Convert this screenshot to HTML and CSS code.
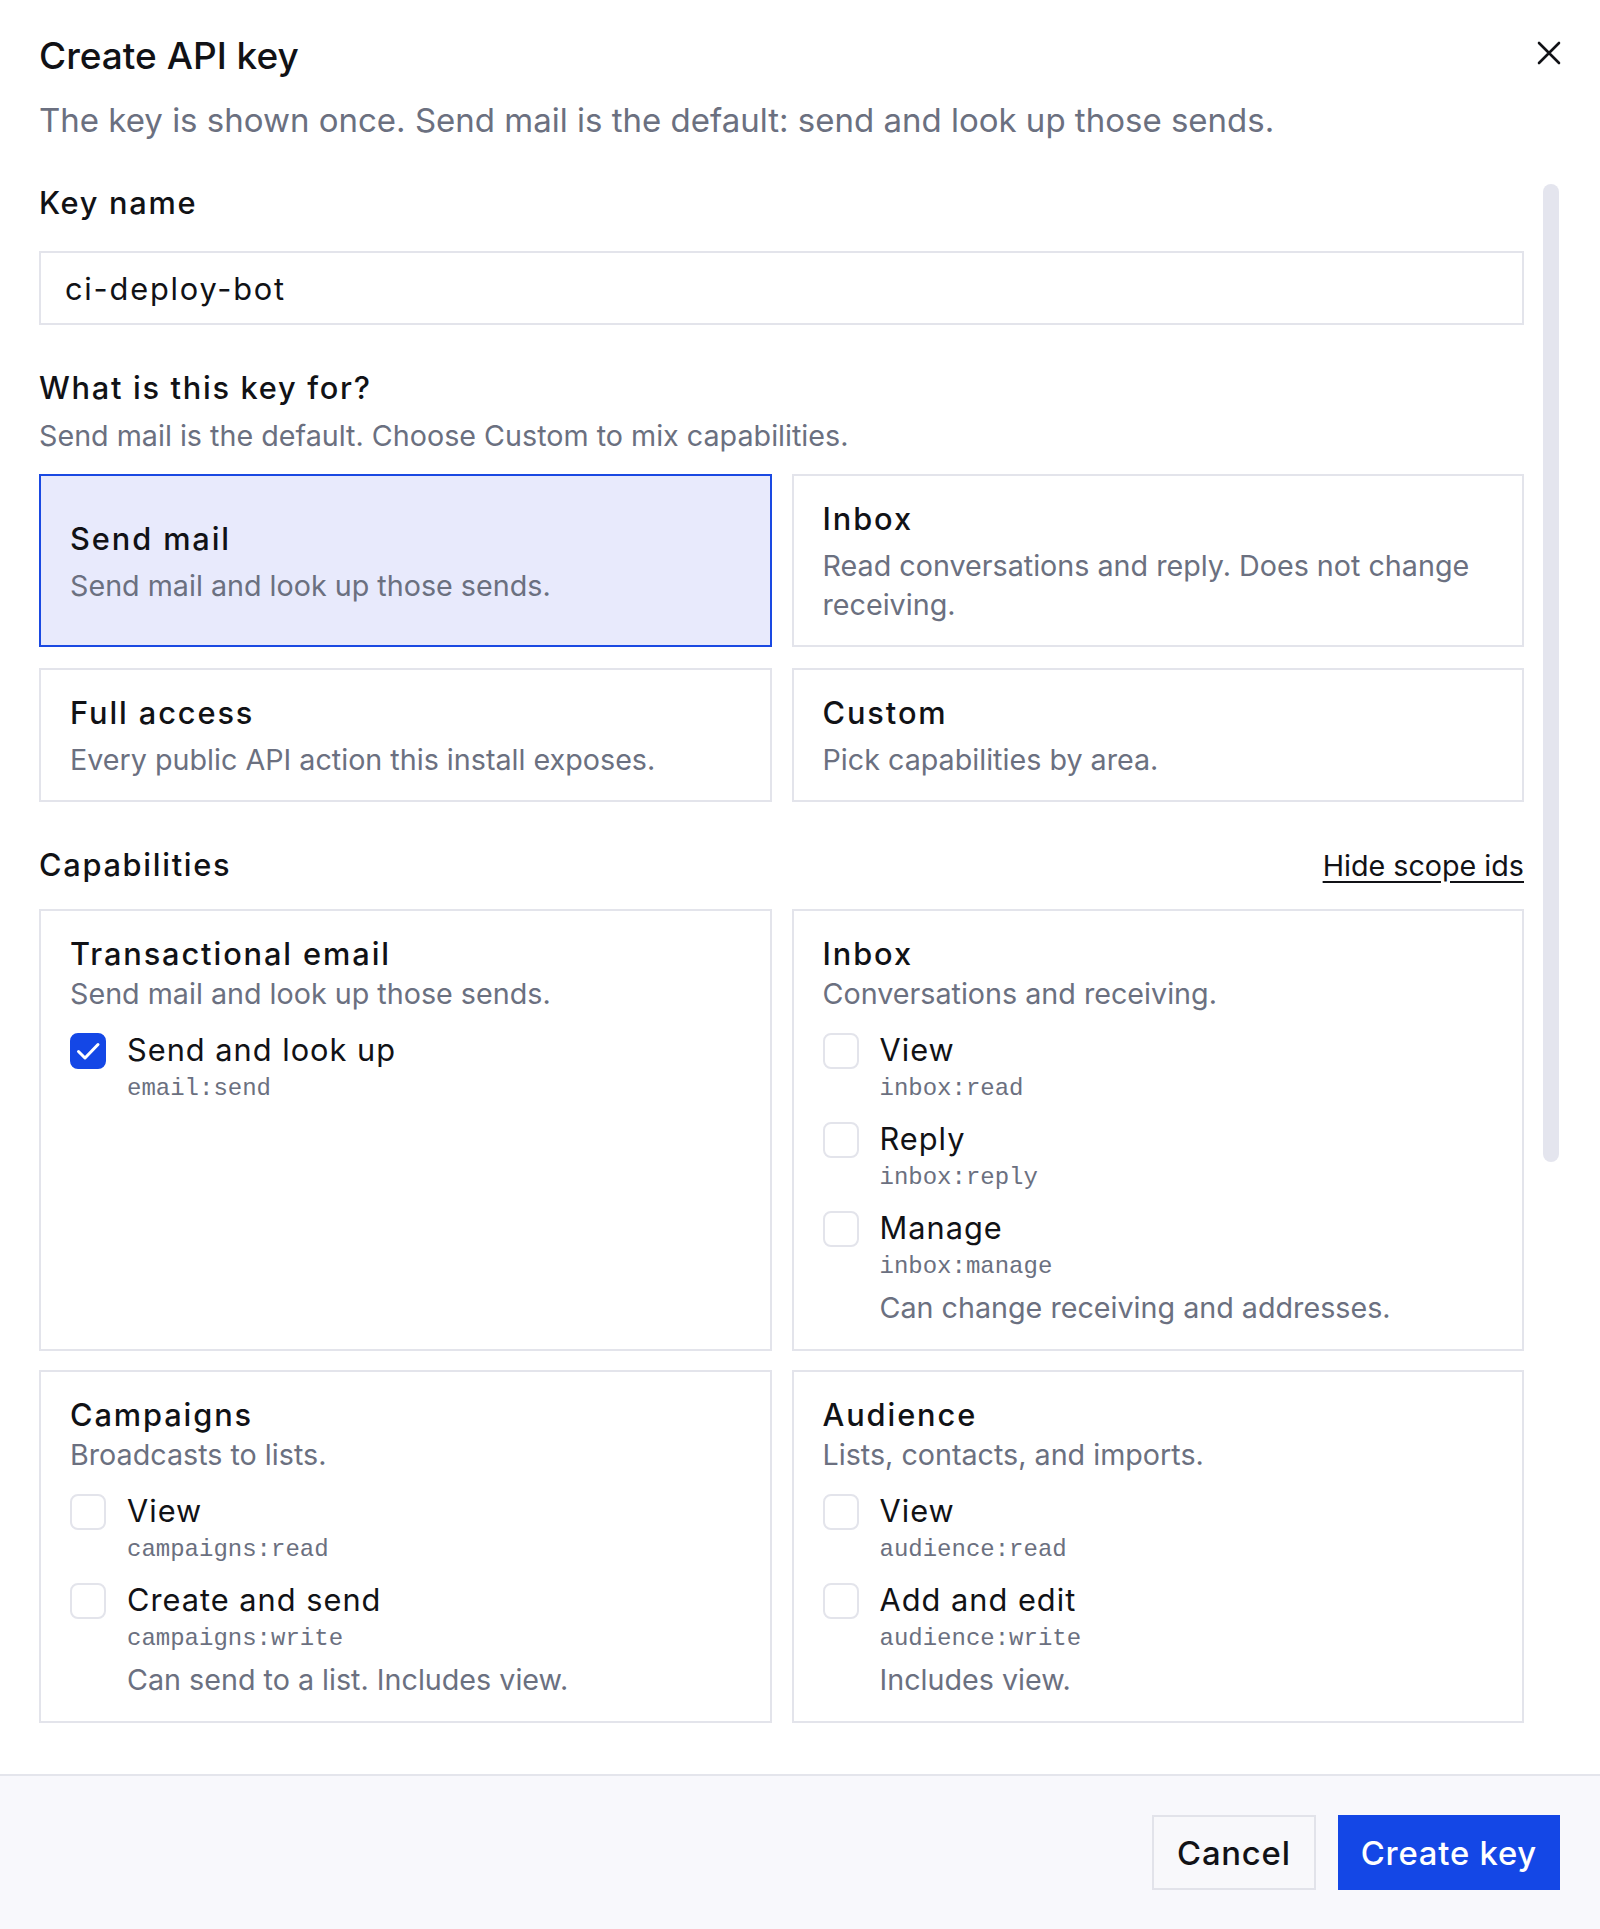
FILE: index.html
```html
<!DOCTYPE html>
<html lang="en">
<head>
    <meta charset="UTF-8">
    <meta name="viewport" content="width=device-width, initial-scale=1.0">
    <title>Create API key</title>
    <link rel="stylesheet" href="styles.css">
</head>
<body>
    <div class="dialog">
        <div class="dialog-head">
            <h1>Create API key</h1>
            <p class="lead">The key is shown once. Send mail is the default: send and look up those sends.</p>
            <button class="close" aria-label="Close">
                <svg width="24" height="24" viewBox="0 0 24 24" fill="none" stroke="currentColor" stroke-width="2.6" stroke-linecap="round">
                    <path d="M2 2 L22 22 M22 2 L2 22"/>
                </svg>
            </button>
        </div>

        <div class="dialog-main">
            <div class="dialog-body">
                <div class="field">
                    <label class="field-label" for="keyName">Key name</label>
                    <input type="text" id="keyName" class="text-input" value="ci-deploy-bot">
                </div>

                <div class="field">
                    <div class="field-label">What is this key for?</div>
                    <p class="hint">Send mail is the default. Choose Custom to mix capabilities.</p>
                    <div class="preset-grid">
                        <div class="preset selected">
                            <div class="preset-title">Send mail</div>
                            <div class="preset-desc">Send mail and look up those sends.</div>
                        </div>
                        <div class="preset">
                            <div class="preset-title">Inbox</div>
                            <div class="preset-desc">Read conversations and reply. Does not change receiving.</div>
                        </div>
                        <div class="preset">
                            <div class="preset-title">Full access</div>
                            <div class="preset-desc">Every public API action this install exposes.</div>
                        </div>
                        <div class="preset">
                            <div class="preset-title">Custom</div>
                            <div class="preset-desc">Pick capabilities by area.</div>
                        </div>
                    </div>
                </div>

                <div class="field">
                    <div class="section-row">
                        <div class="field-label">Capabilities</div>
                        <a href="#" class="link">Hide scope ids</a>
                    </div>
                    <div class="cap-grid">
                        <div class="cap-card">
                            <div class="cap-title">Transactional email</div>
                            <div class="cap-desc">Send mail and look up those sends.</div>
                            <div class="cap-list">
                                <div class="cap-item">
                                    <span class="check on"><svg width="36" height="36" viewBox="0 0 36 36" fill="none" stroke="#fff" stroke-width="3" stroke-linecap="round" stroke-linejoin="round"><path d="M8.5 18.5 L15 25 L28 11.5"/></svg></span>
                                    <div>
                                        <div class="cap-name">Send and look up</div>
                                        <code class="scope">email:send</code>
                                    </div>
                                </div>
                            </div>
                        </div>
                        <div class="cap-card">
                            <div class="cap-title">Inbox</div>
                            <div class="cap-desc">Conversations and receiving.</div>
                            <div class="cap-list">
                                <div class="cap-item">
                                    <span class="check"></span>
                                    <div>
                                        <div class="cap-name">View</div>
                                        <code class="scope">inbox:read</code>
                                    </div>
                                </div>
                                <div class="cap-item">
                                    <span class="check"></span>
                                    <div>
                                        <div class="cap-name">Reply</div>
                                        <code class="scope">inbox:reply</code>
                                    </div>
                                </div>
                                <div class="cap-item">
                                    <span class="check"></span>
                                    <div>
                                        <div class="cap-name">Manage</div>
                                        <code class="scope">inbox:manage</code>
                                        <div class="cap-note">Can change receiving and addresses.</div>
                                    </div>
                                </div>
                            </div>
                        </div>
                        <div class="cap-card">
                            <div class="cap-title">Campaigns</div>
                            <div class="cap-desc">Broadcasts to lists.</div>
                            <div class="cap-list">
                                <div class="cap-item">
                                    <span class="check"></span>
                                    <div>
                                        <div class="cap-name">View</div>
                                        <code class="scope">campaigns:read</code>
                                    </div>
                                </div>
                                <div class="cap-item">
                                    <span class="check"></span>
                                    <div>
                                        <div class="cap-name">Create and send</div>
                                        <code class="scope">campaigns:write</code>
                                        <div class="cap-note">Can send to a list. Includes view.</div>
                                    </div>
                                </div>
                            </div>
                        </div>
                        <div class="cap-card">
                            <div class="cap-title">Audience</div>
                            <div class="cap-desc">Lists, contacts, and imports.</div>
                            <div class="cap-list">
                                <div class="cap-item">
                                    <span class="check"></span>
                                    <div>
                                        <div class="cap-name">View</div>
                                        <code class="scope">audience:read</code>
                                    </div>
                                </div>
                                <div class="cap-item">
                                    <span class="check"></span>
                                    <div>
                                        <div class="cap-name">Add and edit</div>
                                        <code class="scope">audience:write</code>
                                        <div class="cap-note">Includes view.</div>
                                    </div>
                                </div>
                            </div>
                        </div>
                    </div>
                </div>
            </div>
            <!-- scroll position indicator for the body -->
            <div class="scroll-track">
                <div class="scroll-thumb"></div>
            </div>
        </div>

        <div class="dialog-foot">
            <button class="btn">Cancel</button>
            <button class="btn primary">Create key</button>
        </div>
    </div>
</body>
</html>
```

FILE: styles.css
```css
* {
    box-sizing: border-box;
}
body {
    margin: 0;
    font-family: "Inter", "Noto Sans", sans-serif;
    color: #111216;
    background: #fff;
}
.dialog {
    height: 100vh;
    display: flex;
    flex-direction: column;
    background: #fff;
}

/* header */
.dialog-head {
    position: relative;
    padding: 34px 39px 42px;
}
.dialog-head h1 {
    margin: 0;
    font-size: 37px;
    line-height: 44px;
    font-weight: 500;
}
.lead {
    margin: 20px 0 0;
    font-size: 33px;
    line-height: 44px;
    color: #6b7080;
}
.close {
    position: absolute;
    top: 33px;
    right: 31px;
    width: 40px;
    height: 40px;
    display: flex;
    align-items: center;
    justify-content: center;
    padding: 0;
    border: none;
    background: none;
    color: #111216;
    cursor: pointer;
}

/* scrolling body */
.dialog-main {
    flex: 1;
    min-height: 0;
    display: flex;
}
.dialog-body {
    flex: 1;
    min-width: 0;
    overflow: hidden;
    padding: 0 19px 0 39px;
}
.scroll-track {
    flex: none;
    width: 16px;
    margin-right: 41px;
}
.scroll-thumb {
    height: 978px;
    border-radius: 8px;
    background: #e4e5ee;
}
.field {
    margin-bottom: 44px;
}
.field-label {
    display: block;
    font-size: 30.75px;
    line-height: 38px;
    font-weight: 500;
    letter-spacing: 1.7px;
    margin-bottom: 29px;
}
.text-input {
    display: block;
    width: 100%;
    height: 74px;
    padding: 0 24px;
    border: 2px solid #e3e4eb;
    border-radius: 0;
    font-family: inherit;
    font-size: 30.75px;
    letter-spacing: 1.8px;
    color: #111216;
    background: #fff;
    outline: none;
}
.hint {
    margin: -20px 0 18px;
    font-size: 28.7px;
    line-height: 40px;
    color: #6b7080;
}

/* presets */
.preset-grid,
.cap-grid {
    display: grid;
    grid-template-columns: 1fr 1fr;
    gap: 21px 20px;
}
.cap-grid {
    row-gap: 19px;
}
.preset {
    display: flex;
    flex-direction: column;
    justify-content: center;
    padding: 23px 29px 21px;
    border: 2px solid #e3e4eb;
    background: #fff;
    cursor: pointer;
}
.preset.selected {
    border-color: #1a49e2;
    background: #e8eafc;
}
.preset-title {
    font-size: 30.75px;
    line-height: 40px;
    font-weight: 500;
    letter-spacing: 1.9px;
    margin-bottom: 7px;
}
.preset-desc {
    font-size: 28.7px;
    line-height: 39px;
    color: #6b7080;
}

/* capabilities */
.section-row {
    display: flex;
    justify-content: space-between;
    align-items: center;
    margin-bottom: 25px;
}
.section-row .field-label {
    margin-bottom: 0;
}
.link {
    font-size: 28.7px;
    color: #111216;
    text-decoration: underline;
    text-underline-offset: 5px;
}
.cap-card {
    padding: 23px 29px 21px;
    border: 2px solid #e3e4eb;
    background: #fff;
}
.cap-title {
    font-size: 30.75px;
    line-height: 40px;
    font-weight: 500;
    letter-spacing: 1.9px;
}
.cap-desc {
    font-size: 28.7px;
    line-height: 40px;
    color: #6b7080;
}
.cap-list {
    display: flex;
    flex-direction: column;
    gap: 13px;
    margin-top: 16px;
}
.cap-item {
    display: flex;
    align-items: flex-start;
    gap: 21px;
}
.check {
    flex: none;
    width: 36px;
    height: 36px;
    margin-top: 3px;
    border: 2px solid #e3e4eb;
    border-radius: 8px;
    background: #fff;
}
.check.on {
    border-color: #1447e6;
    background: #1447e6;
    display: flex;
    align-items: center;
    justify-content: center;
}
.check.on svg {
    flex: none;
}
.cap-name {
    font-size: 30.75px;
    line-height: 40px;
    letter-spacing: 1px;
}
.scope {
    display: block;
    margin-top: 2px;
    font-family: "Liberation Mono", monospace;
    font-size: 24px;
    line-height: 34px;
    color: #6b7080;
}
.cap-note {
    margin-top: 4px;
    font-size: 28.7px;
    line-height: 40px;
    color: #6b7080;
}

/* footer */
.dialog-foot {
    display: flex;
    justify-content: flex-end;
    gap: 22px;
    padding: 39px 40px;
    border-top: 2px solid #e4e5ec;
    background: #f8f8fc;
}
.btn {
    height: 75px;
    padding: 0 23px;
    border: 2px solid #e2e3ea;
    background: #f8f8fb;
    font-family: inherit;
    font-size: 32.8px;
    font-weight: 500;
    letter-spacing: 0.8px;
    color: #111216;
    cursor: pointer;
}
.btn.primary {
    padding: 0 21px;
    border-color: #1447e6;
    background: #1447e6;
    color: #fff;
}
```
